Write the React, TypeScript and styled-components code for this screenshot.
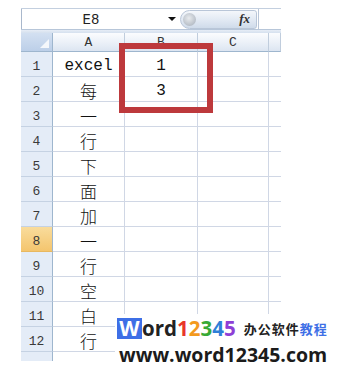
import React from "react";
import styled, { createGlobalStyle } from "styled-components";

const Global = createGlobalStyle`
  html, body { margin: 0; padding: 0; background: #ffffff; }
  * { box-sizing: border-box; }
`;

const Page = styled.div`
  position: relative;
  width: 340px;
  height: 368px;
  overflow: hidden;
  padding: 8px 0 0 21px;
  background: #fff;
`;

const Sheet = styled.div`
  width: 260px;
  display: flex;
  flex-direction: column;
`;

const FormulaBar = styled.div`
  display: flex;
  align-items: center;
  height: 22px;
  border-top: 1px solid #c3cfdf;
  border-bottom: 1px solid #b7c6d9;
  background: #fff;
`;

const NameBox = styled.div`
  display: flex;
  align-items: center;
  width: 157px;
  height: 100%;
  border-left: 1px solid #a9b8cc;
  background: #fff;
`;

const NameLabel = styled.div`
  width: 138px;
  text-align: center;
  font-family: "Liberation Mono", monospace;
  font-size: 14px;
  color: #222;
  padding-top: 1px;
`;

const DropArrow = styled.div`
  margin-left: 8px;
  width: 0;
  height: 0;
  border-left: 4px solid transparent;
  border-right: 4px solid transparent;
  border-top: 4px solid #111;
`;

const Pill = styled.div`
  position: relative;
  display: flex;
  align-items: center;
  justify-content: flex-end;
  width: 77px;
  height: 19px;
  margin-left: 2px;
  border-radius: 10px 3px 3px 10px;
  border: 1px solid #b9c6d8;
  background: linear-gradient(#f4f7fb, #dfe7f2 60%, #cfdbea);
  padding-right: 6px;
`;

const PillKnob = styled.div`
  position: absolute;
  left: 2px;
  top: 2px;
  width: 13px;
  height: 13px;
  border-radius: 50%;
  background: radial-gradient(circle at 45% 40%, #e8ebee, #b8bfc8 70%, #9ea6b0);
`;

const Fx = styled.span`
  font-family: "Liberation Serif", serif;
  font-style: italic;
  font-weight: bold;
  font-size: 13px;
  color: #333;
`;

const FormulaInput = styled.div`
  flex: 1;
  height: 100%;
  border-left: 1px solid #b9c6d8;
  margin-left: 1px;
  background: #fff;
`;

const Band = styled.div`
  height: 3px;
  background: linear-gradient(#e6edf6, #d5e0ee);
`;

const Grid = styled.div`
  display: grid;
  grid-template-columns: 32px 72px 73px 71px 12px;
  grid-template-rows: 19px repeat(12, 25px) 9px;
`;

const Corner = styled.div`
  position: relative;
  background: linear-gradient(#d3e0f1, #bccfe8);
  border-right: 1px solid #9eb6ce;
  border-bottom: 1px solid #9eb6ce;
  &::after {
    content: "";
    position: absolute;
    right: 3px;
    bottom: 3px;
    width: 0;
    height: 0;
    border-left: 9px solid transparent;
    border-bottom: 9px solid #f4f7fb;
  }
`;

const ColHead = styled.div`
  display: flex;
  align-items: center;
  justify-content: center;
  background: linear-gradient(#fbfcfe, #e9eff7 60%, #dce5f1);
  border-right: 1px solid #c0cddd;
  border-bottom: 1px solid #9eb6ce;
  font-family: "Liberation Mono", monospace;
  font-size: 13px;
  color: #333;
  padding-top: 1px;
`;

const RowHead = styled.div<{ $active?: boolean }>`
  display: flex;
  align-items: center;
  justify-content: center;
  background: ${(p) =>
    p.$active ? "linear-gradient(#f9dc9c, #f4c56e)" : "#e4ecf7"};
  border-right: 1px solid #9eb6ce;
  border-bottom: 1px solid ${(p) => (p.$active ? "#e8b860" : "#c5d2e3")};
  font-family: "Liberation Mono", monospace;
  font-size: 13px;
  color: #3a3a3a;
  padding-top: 4px;
`;

const Cell = styled.div<{ $cjk?: boolean }>`
  display: flex;
  align-items: center;
  justify-content: center;
  border-right: 1px solid #d0d7e5;
  border-bottom: 1px solid #d0d7e5;
  font-family: ${(p) =>
    p.$cjk
      ? `"Noto Sans CJK SC", sans-serif`
      : `"Liberation Mono", "Noto Sans CJK SC", monospace`};
  font-size: ${(p) => (p.$cjk ? "17px" : "16px")};
  font-weight: ${(p) => (p.$cjk ? 300 : 400)};
  color: #111;
  padding-top: 3px;
`;

const EdgeCell = styled.div`
  border-bottom: 1px solid #d0d7e5;
`;

const TailHead = styled.div`
  background: #e4ecf7;
  border-right: 1px solid #9eb6ce;
`;

const TailCell = styled.div``;

const Highlight = styled.div`
  position: absolute;
  left: 119px;
  top: 43px;
  width: 94px;
  height: 70px;
  border: 6px solid #bd393c;
`;

const Watermark = styled.div`
  position: absolute;
  left: 115px;
  top: 314px;
  right: 0;
  bottom: 0;
  background: #fff;
  display: flex;
  flex-direction: column;
  padding: 3px 0 0 2px;
`;

const LogoLine = styled.div`
  display: flex;
  align-items: center;
  height: 22px;
`;

const WBox = styled.span`
  display: flex;
  align-items: center;
  justify-content: center;
  width: 25px;
  height: 21px;
  background: #3e6fe6;
  color: #fff;
  font-family: "Open Sans", sans-serif;
  font-weight: 700;
  font-size: 21px;
  line-height: 1;
`;

const LogoText = styled.span<{ $color: string }>`
  font-family: "Open Sans", sans-serif;
  font-weight: 700;
  font-size: 20.5px;
  line-height: 1;
  color: ${(p) => p.$color};
`;

const LogoCn = styled.span<{ $color: string; $first?: boolean }>`
  font-family: "Noto Sans CJK SC", sans-serif;
  font-weight: 700;
  font-size: 13px;
  letter-spacing: 1px;
  color: ${(p) => p.$color};
  margin-left: ${(p) => (p.$first ? "8px" : "0")};
`;

const Url = styled.div`
  font-family: "Open Sans", sans-serif;
  font-weight: 700;
  font-size: 19.5px;
  line-height: 1;
  color: #1b1b1b;
  margin-top: 6px;
  margin-left: 2px;
`;

const rows: { a: string; b?: string }[] = [
  { a: "excel", b: "1" },
  { a: "每", b: "3" },
  { a: "一" },
  { a: "行" },
  { a: "下" },
  { a: "面" },
  { a: "加" },
  { a: "一" },
  { a: "行" },
  { a: "空" },
  { a: "白" },
  { a: "行" },
];

const digits: [string, string][] = [
  ["1", "#e8372a"],
  ["2", "#f39a1e"],
  ["3", "#38a935"],
  ["4", "#2f7fd8"],
  ["5", "#8e3fd6"],
];

export default function App() {
  return (
    <>
      <Global />
      <Page>
        <Sheet>
          <FormulaBar>
            <NameBox>
              <NameLabel>E8</NameLabel>
              <DropArrow />
            </NameBox>
            <Pill>
              <PillKnob />
              <Fx>fx</Fx>
            </Pill>
            <FormulaInput />
          </FormulaBar>
          <Band />
          <Grid>
            <Corner />
            <ColHead>A</ColHead>
            <ColHead>B</ColHead>
            <ColHead>C</ColHead>
            <ColHead />
            {rows.map((r, i) => (
              <React.Fragment key={i}>
                <RowHead $active={i === 7}>{i + 1}</RowHead>
                <Cell $cjk={!/^[a-z]/.test(r.a)}>{r.a}</Cell>
                <Cell>{r.b ?? ""}</Cell>
                <Cell />
                <EdgeCell />
              </React.Fragment>
            ))}
            <TailHead />
            <TailCell />
            <TailCell />
            <TailCell />
            <TailCell />
          </Grid>
        </Sheet>
        <Highlight />
        <Watermark>
          <LogoLine>
            <WBox>W</WBox>
            <LogoText $color="#222">ord</LogoText>
            {digits.map(([d, c]) => (
              <LogoText key={d} $color={c}>
                {d}
              </LogoText>
            ))}
            <LogoCn $color="#222" $first>
              办公软件
            </LogoCn>
            <LogoCn $color="#3e6fe6">教程</LogoCn>
          </LogoLine>
          <Url>www.word12345.com</Url>
        </Watermark>
      </Page>
    </>
  );
}
